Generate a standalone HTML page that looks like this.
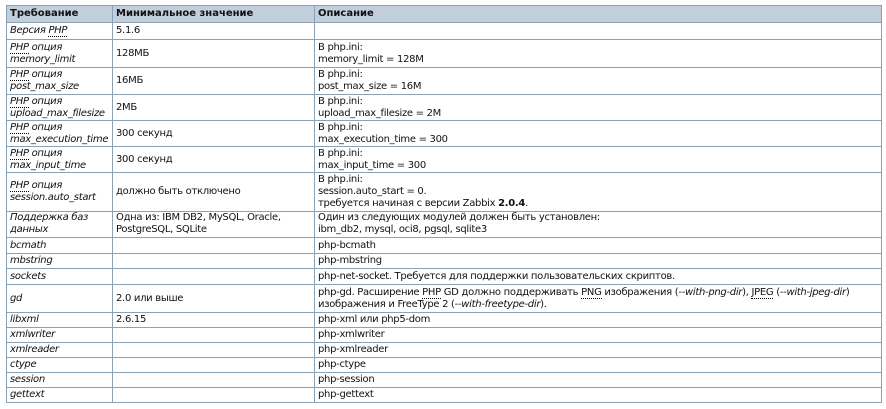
<!DOCTYPE html><html><head><meta charset="utf-8"><style>
body{margin:0;background:#fff;}
table{position:absolute;left:6px;top:5px;width:876px;border-collapse:collapse;font-family:"DejaVu Sans","Liberation Sans",sans-serif;font-size:10px;color:#111;table-layout:fixed;}
td,th{border:1px solid #8aa2b5;padding:0 3px;line-height:12px;vertical-align:middle;text-align:left;overflow:hidden;white-space:nowrap;}
td{letter-spacing:-0.3px;}
th{background:#c3cedc;font-weight:bold;height:16px;}
td:first-child{font-style:italic;}
abbr{border-bottom:1px dotted #000;text-decoration:none;}
</style></head><body>
<table>
<colgroup><col style="width:106px"><col style="width:202px"><col></colgroup>
<tr><th>Требование</th><th>Минимальное значение</th><th>Описание</th></tr>
<tr style="height:17px"><td>Версия <abbr>PHP</abbr></td><td>5.1.6</td><td></td></tr>
<tr style="height:28px"><td><abbr>PHP</abbr> опция<br>memory_limit</td><td>128МБ</td><td>В php.ini:<br>memory_limit = 128M</td></tr>
<tr style="height:27px"><td><abbr>PHP</abbr> опция<br>post_max_size</td><td>16МБ</td><td>В php.ini:<br>post_max_size = 16M</td></tr>
<tr style="height:26px"><td><abbr>PHP</abbr> опция<br>upload_max_filesize</td><td>2МБ</td><td>В php.ini:<br>upload_max_filesize = 2M</td></tr>
<tr style="height:26px"><td><abbr>PHP</abbr> опция<br>max_execution_time</td><td>300 секунд</td><td>В php.ini:<br>max_execution_time = 300</td></tr>
<tr style="height:26px"><td><abbr>PHP</abbr> опция<br>max_input_time</td><td>300 секунд</td><td>В php.ini:<br>max_input_time = 300</td></tr>
<tr style="height:39px"><td><abbr>PHP</abbr> опция<br>session.auto_start</td><td>должно быть отключено</td><td>В php.ini:<br>session.auto_start = 0.<br>требуется начиная с версии Zabbix <b>2.0.4</b>.</td></tr>
<tr style="height:26px"><td style="vertical-align:top">Поддержка баз<br>данных</td><td style="vertical-align:top">Одна из: IBM DB2, MySQL, Oracle,<br>PostgreSQL, SQLite</td><td style="vertical-align:top">Один из следующих модулей должен быть установлен:<br>ibm_db2, mysql, oci8, pgsql, sqlite3</td></tr>
<tr style="height:16px"><td>bcmath</td><td></td><td>php-bcmath</td></tr>
<tr style="height:15px"><td>mbstring</td><td></td><td>php-mbstring</td></tr>
<tr style="height:16px"><td>sockets</td><td></td><td>php-net-socket. Требуется для поддержки пользовательских скриптов.</td></tr>
<tr style="height:28px"><td>gd</td><td>2.0 или выше</td><td>php-gd. Расширение <abbr>PHP</abbr> GD должно поддерживать <abbr>PNG</abbr> изображения (<i>--with-png-dir</i>), <abbr>JPEG</abbr> (<i>--with-jpeg-dir</i>)<br>изображения и FreeType 2 (<i>--with-freetype-dir</i>).</td></tr>
<tr style="height:15px"><td>libxml</td><td>2.6.15</td><td>php-xml или php5-dom</td></tr>
<tr style="height:15px"><td>xmlwriter</td><td></td><td>php-xmlwriter</td></tr>
<tr style="height:15px"><td>xmlreader</td><td></td><td>php-xmlreader</td></tr>
<tr style="height:15px"><td>ctype</td><td></td><td>php-ctype</td></tr>
<tr style="height:15px"><td>session</td><td></td><td>php-session</td></tr>
<tr style="height:15px"><td>gettext</td><td></td><td>php-gettext</td></tr>
</table>
</body></html>
